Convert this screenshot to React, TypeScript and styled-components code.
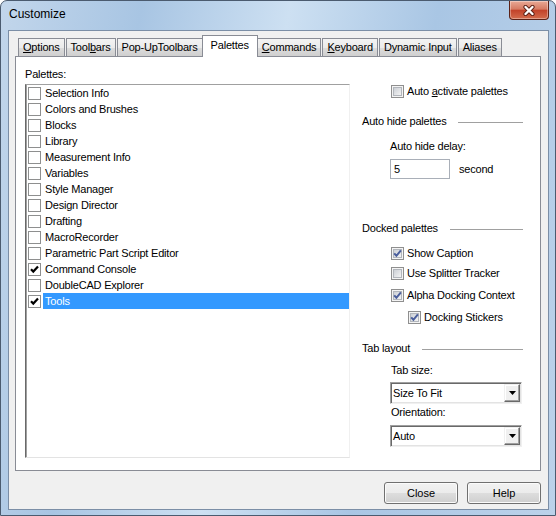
import React from 'react';
import styled, { createGlobalStyle } from 'styled-components';

const GlobalStyle = createGlobalStyle`
  html, body {
    margin: 0;
    padding: 0;
  }
  body {
    font-family: 'Liberation Sans', Arial, sans-serif;
    color: #000;
  }
  * {
    box-sizing: border-box;
  }
`;

interface TabDef {
  id: string;
  label: React.ReactNode;
}

const tabs: TabDef[] = [
  { id: 'options', label: <><u>O</u>ptions</> },
  { id: 'toolbars', label: <>Tool<u>b</u>ars</> },
  { id: 'popup', label: 'Pop-UpToolbars' },
  { id: 'palettes', label: 'Palettes' },
  { id: 'commands', label: <><u>C</u>ommands</> },
  { id: 'keyboard', label: <><u>K</u>eyboard</> },
  { id: 'dynamic', label: 'Dynamic Input' },
  { id: 'aliases', label: 'Aliases' },
];

const palettes = [
  { name: 'Selection Info', checked: false },
  { name: 'Colors and Brushes', checked: false },
  { name: 'Blocks', checked: false },
  { name: 'Library', checked: false },
  { name: 'Measurement Info', checked: false },
  { name: 'Variables', checked: false },
  { name: 'Style Manager', checked: false },
  { name: 'Design Director', checked: false },
  { name: 'Drafting', checked: false },
  { name: 'MacroRecorder', checked: false },
  { name: 'Parametric Part Script Editor', checked: false },
  { name: 'Command Console', checked: true },
  { name: 'DoubleCAD Explorer', checked: false },
  { name: 'Tools', checked: true },
];

const SELECTED = 'Tools';

const CloseGlyph = () => (
  <svg width="14" height="11" viewBox="0 0 14 11">
    <path d="M3.5 2L10.5 9M10.5 2L3.5 9" stroke="#5a1f14" strokeWidth="4.2" strokeLinecap="round" />
    <path d="M3.5 2L10.5 9M10.5 2L3.5 9" stroke="#fff" strokeWidth="2.4" strokeLinecap="round" />
  </svg>
);

const ListCheck: React.FC<{ checked: boolean }> = ({ checked }) => (
  <svg width="13" height="13" viewBox="0 0 13 13">
    <rect x="0.5" y="0.5" width="12" height="12" fill="#fff" stroke="#8e8f8f" />
    {checked && <path d="M3 6.2l2.3 2.4L10 3.6" fill="none" stroke="#000" strokeWidth="2.2" />}
  </svg>
);

const AeroCheck: React.FC<{ checked?: boolean }> = ({ checked }) => (
  <svg width="13" height="13" viewBox="0 0 13 13">
    <defs>
      <linearGradient id="aeroFill" x1="0" y1="0" x2="1" y2="1">
        <stop offset="0" stopColor="#c9cdd3" />
        <stop offset="1" stopColor="#f6f6f6" />
      </linearGradient>
    </defs>
    <rect x="0.5" y="0.5" width="12" height="12" fill="#f4f4f4" stroke="#8f8f8f" />
    <rect x="2.5" y="2.5" width="8" height="8" fill="url(#aeroFill)" stroke="#b2b6bc" />
    {checked && <path d="M3.2 6.4l2.2 2.4L9.9 3.4" fill="none" stroke="#4a5e9c" strokeWidth="2" />}
  </svg>
);

const ComboArrowGlyph = () => (
  <svg width="7" height="4" viewBox="0 0 7 4">
    <path d="M0 0h7L3.5 4z" fill="#000" />
  </svg>
);

const App: React.FC = () => (
  <>
    <GlobalStyle />
    <Window>
      <TitleBar>
        <Caption>Customize</Caption>
        <CloseButton>
          <CloseGlyph />
        </CloseButton>
      </TitleBar>

      <Client>
        <TabStrip>
          {tabs.map((tab) => (
            <Tab key={tab.id} $active={tab.id === 'palettes'}>
              {tab.label}
            </Tab>
          ))}
        </TabStrip>

        <Panel>
          <LeftColumn>
            <ListLabel>Palettes:</ListLabel>
            <ListBox>
              {palettes.map((p) => (
                <ListRow key={p.name}>
                  <ListCheck checked={p.checked} />
                  <ItemText $selected={p.name === SELECTED}>{p.name}</ItemText>
                </ListRow>
              ))}
            </ListBox>
          </LeftColumn>

          <RightColumn>
            <CheckRow $mt={15} $indent={31}>
              <AeroCheck />
              <span>
                Auto <u>a</u>ctivate palettes
              </span>
            </CheckRow>

            <GroupHeader $mt={15}>
              <span>Auto hide palettes</span>
              <Rule />
            </GroupHeader>
            <FieldLabel $mt={11} $indent={30}>
              Auto hide delay:
            </FieldLabel>
            <InputRow $mt={6} $indent={30}>
              <TextBox>5</TextBox>
              <span>second</span>
            </InputRow>

            <GroupHeader $mt={42}>
              <span>Docked palettes</span>
              <Rule />
            </GroupHeader>
            <CheckRow $mt={10} $indent={31}>
              <AeroCheck checked />
              <span>Show Caption</span>
            </CheckRow>
            <CheckRow $mt={4} $indent={31}>
              <AeroCheck />
              <span>Use Splitter Tracker</span>
            </CheckRow>
            <CheckRow $mt={6} $indent={31}>
              <AeroCheck checked />
              <span>Alpha Docking Context</span>
            </CheckRow>
            <CheckRow $mt={6} $indent={48}>
              <AeroCheck checked />
              <span>Docking Stickers</span>
            </CheckRow>

            <GroupHeader $mt={16}>
              <span>Tab layout</span>
              <Rule />
            </GroupHeader>
            <FieldLabel $mt={8} $indent={31}>
              Tab size:
            </FieldLabel>
            <Combo $mt={5}>
              <span>Size To Fit</span>
              <ComboButton>
                <ComboArrowGlyph />
              </ComboButton>
            </Combo>
            <FieldLabel $mt={1} $indent={31}>
              Orientation:
            </FieldLabel>
            <Combo $mt={6}>
              <span>Auto</span>
              <ComboButton>
                <ComboArrowGlyph />
              </ComboButton>
            </Combo>
          </RightColumn>
        </Panel>

        <Footer>
          <PushButton>Close</PushButton>
          <PushButton>Help</PushButton>
        </Footer>
      </Client>
    </Window>
  </>
);

export default App;

const Window = styled.div`
  width: 556px;
  height: 516px;
  display: flex;
  flex-direction: column;
  border: 1px solid #4b5b6f;
  border-radius: 7px 7px 0 0;
  background: linear-gradient(
    100deg,
    #c2d6eb 0%,
    #a8c5e3 22%,
    #cde0f2 45%,
    #a9c6e4 68%,
    #bcd2ea 100%
  );
  overflow: hidden;
`;

const TitleBar = styled.div`
  height: 29px;
  flex-shrink: 0;
  display: flex;
  align-items: flex-start;
  justify-content: space-between;
`;

const Caption = styled.div`
  padding: 6px 0 0 8px;
  font-size: 12px;
  line-height: 14px;
`;

const CloseButton = styled.div`
  width: 40px;
  height: 19px;
  margin-right: 6px;
  display: flex;
  align-items: center;
  justify-content: center;
  border: 1px solid #5b2217;
  border-top: none;
  border-radius: 0 0 4px 4px;
  background: linear-gradient(
    to bottom,
    #e9a996 0%,
    #d67b63 45%,
    #c2432a 52%,
    #d36c4d 100%
  );
  box-shadow: inset 0 0 0 1px rgba(255, 255, 255, 0.35);
`;

const Client = styled.div`
  flex: 1;
  margin: 0 6px 5px 7px;
  padding: 4px 7px 5px 6px;
  display: flex;
  flex-direction: column;
  border: 1px solid #7b8ea6;
  background: #f0f0f0;
  font-size: 11px;
  letter-spacing: -0.2px;
`;

const TabStrip = styled.div`
  position: relative;
  z-index: 1;
  height: 22px;
  margin: 0 0 -1px 2px;
  display: flex;
  align-items: flex-end;
`;

const Tab = styled.div<{ $active?: boolean }>`
  position: relative;
  height: ${(p) => (p.$active ? '22px' : '18px')};
  margin: ${(p) => (p.$active ? '0 -2px 0 -1px' : '0 0 1px 1px')};
  padding: ${(p) => (p.$active ? '0 8px' : '0 4px')};
  z-index: ${(p) => (p.$active ? 2 : 1)};
  border: 1px solid #898c95;
  border-bottom: none;
  line-height: ${(p) => (p.$active ? '18px' : '17px')};
  white-space: nowrap;
  background: ${(p) =>
    p.$active
      ? '#fff'
      : 'linear-gradient(to bottom, #f3f3f3 0%, #ebebeb 50%, #dddddd 51%, #cfcfcf 100%)'};
`;

const Panel = styled.div`
  height: 415px;
  padding: 11px 0 0 9px;
  display: grid;
  grid-template-columns: 325px 163px;
  column-gap: 10px;
  align-items: start;
  border: 1px solid #898c95;
  background: #fff;
`;

const LeftColumn = styled.div`
  display: flex;
  flex-direction: column;
`;

const ListLabel = styled.div`
  height: 13px;
  line-height: 13px;
  margin-bottom: 3px;
`;

const ListBox = styled.div`
  width: 325px;
  height: 374px;
  border: 1px solid;
  border-color: #a0a0a0 #f0f0f0 #e3e3e3 #696969;
  box-shadow: inset 1px 0 0 #a0a0a0;
  background: #fff;
`;

const ListRow = styled.div`
  height: 16px;
  display: flex;
  align-items: center;
  padding-left: 2px;

  svg {
    flex-shrink: 0;
  }
`;

const ItemText = styled.span<{ $selected?: boolean }>`
  flex: 1;
  height: 16px;
  margin-left: 2px;
  padding-left: 2px;
  line-height: 16px;
  white-space: nowrap;
  color: ${(p) => (p.$selected ? '#fff' : '#000')};
  background: ${(p) => (p.$selected ? '#3399ff' : 'transparent')};
`;

const RightColumn = styled.div`
  display: flex;
  flex-direction: column;
`;

const CheckRow = styled.div<{ $mt: number; $indent: number }>`
  height: 16px;
  margin-top: ${(p) => p.$mt}px;
  padding-left: ${(p) => p.$indent}px;
  display: flex;
  align-items: center;
  gap: 3px;
  white-space: nowrap;
  line-height: 16px;
`;

const GroupHeader = styled.div<{ $mt: number }>`
  height: 14px;
  margin-top: ${(p) => p.$mt}px;
  padding-left: 2px;
  display: flex;
  align-items: center;
  gap: 12px;
  line-height: 14px;
  white-space: nowrap;
`;

const Rule = styled.div`
  flex: 1;
  height: 1px;
  margin-top: 3px;
  background: #a0a0a0;
`;

const FieldLabel = styled.div<{ $mt: number; $indent: number }>`
  height: 14px;
  margin-top: ${(p) => p.$mt}px;
  padding-left: ${(p) => p.$indent}px;
  line-height: 14px;
  white-space: nowrap;
`;

const InputRow = styled.div<{ $mt: number; $indent: number }>`
  height: 20px;
  margin-top: ${(p) => p.$mt}px;
  padding-left: ${(p) => p.$indent}px;
  display: flex;
  align-items: center;
  gap: 9px;
`;

const TextBox = styled.div`
  width: 60px;
  height: 20px;
  padding-left: 3px;
  line-height: 18px;
  border: 1px solid #a9afb8;
  background: #fff;
`;

const Combo = styled.div<{ $mt: number }>`
  width: 132px;
  height: 22px;
  margin: ${(p) => p.$mt}px 0 0 30px;
  padding: 1px 1px 1px 2px;
  display: flex;
  align-items: center;
  border: 1px solid;
  border-color: #a0a0a0 #f0f0f0 #f0f0f0 #a0a0a0;
  box-shadow: inset 1px 1px 0 #696969, inset -1px -1px 0 #e3e3e3;
  background: #fff;
`;

const ComboButton = styled.div`
  width: 16px;
  height: 18px;
  margin-left: auto;
  display: flex;
  align-items: center;
  justify-content: center;
  border: 1px solid;
  border-color: #f0f0f0 #696969 #696969 #f0f0f0;
  box-shadow: inset -1px -1px 0 #a0a0a0, inset 1px 1px 0 #fff;
  background: #f0f0f0;
`;

const Footer = styled.div`
  margin-top: 11px;
  display: flex;
  justify-content: flex-end;
  gap: 9px;
`;

const PushButton = styled.button`
  width: 74px;
  height: 22px;
  padding: 0;
  border: 1px solid #707070;
  border-radius: 3px;
  font: inherit;
  color: #000;
  background: linear-gradient(
    to bottom,
    #f2f2f2 0%,
    #ebebeb 50%,
    #dddddd 51%,
    #cfcfcf 100%
  );
  box-shadow: inset 0 0 0 1px #fbfbfb;
`;
